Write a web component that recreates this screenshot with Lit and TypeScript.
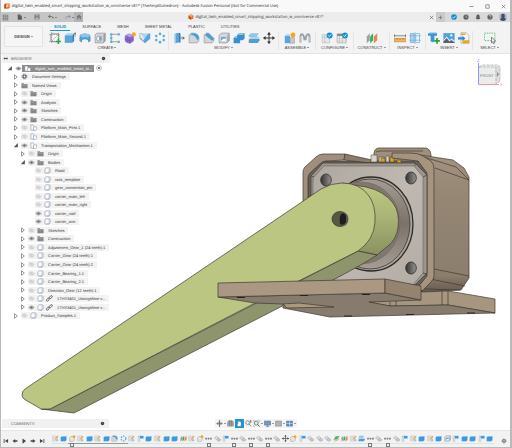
import { LitElement, html, svg, css, nothing } from "lit";
import { customElement, property } from "lit/decorators.js";
import { classMap } from "lit/directives/class-map.js";

/* All glyphs are drawn on a 16 x 16 grid. */
const GLYPHS: Record<string, unknown> = {
  sketch: svg`<path d="M2.500 2.500h10.500v10.500H2.500z" fill="#fafafa" stroke="#777" stroke-width="1"/><path d="M0 3.500h15M0 12.500h11M3.500 0v15M12.500 1v10M4 12l8-8" stroke="#777" stroke-width=".8" stroke-dasharray="2 1"/><path d="M12.500 9v7M9 12.500h7" stroke="#27a844" stroke-width="2"/>`,
  extrude: svg`<path d="M1 4.500l3-3h9l-2 3z" fill="#a9d3ef"/><path d="M1 4.500h10v10H1z" fill="#5aa5dc"/><path d="M11 4.500l2.500-3V12L11 14.500z" fill="#2f7fbd"/><path d="M14.800 1v5M13.500 3l1.300-2 1.200 2" stroke="#444" fill="none" stroke-width=".8"/>`,
  revolve: svg`<path d="M1 4q7-4 14 0v8l-3 2v-3q-4-2.500-8 0v3l-3-2z" fill="#4b9ed6"/><path d="M1 4q7-4 14 0l-3 3.500q-4-2-8 0z" fill="#8cc5ea"/><path d="M1 7q-2 3 1 6M15 7q2 3-1 6" stroke="#888" fill="none" stroke-width=".7"/>`,
  hole: svg`<path d="M1.500 3.500l2.500-2H15V12l-2.500 2.500h-11z" fill="#d3d6d9" stroke="#888" stroke-width=".8"/><path d="M12.500 3.500v11L15 12V1.500z" fill="#989ea4"/><circle cx="7" cy="8.800" r="3.500" fill="#f5f9fc" stroke="#777" stroke-width=".8"/><path d="M7 6v5.600a2.800 2.800 0 000-5.600z" fill="#5a9fcf"/>`,
  points: svg`<path d="M3 3h10M3 13h10M3 3v10" stroke="#777" stroke-width=".9"/><path d="M1.500 1.500h3v3h-3zM11.500 1.500h3v3h-3zM1.500 11.500h3v3h-3zM11.500 11.500h3v3h-3zM1.500 6.500h3v3h-3z" fill="#5fb0e0"/>`,
  form: svg`<path d="M1 6q0-2 2-2.500L7 2l6 2.500v7.500l-5 3.500-5-1.500q-2-1-2-3z" fill="#8c6bd0"/><path d="M2 5l5-3 6 2-5 3z" fill="#b7a0ea"/><path d="M5 5v9M8 7v8M1.500 9.500L8 11.500l5-2.500" stroke="#6845b3" stroke-width=".7" fill="none"/><circle cx="13" cy="3.200" r="2.800" fill="#f7a81b"/>`,
  thicken: svg`<path d="M1 2h3l4 6 4-6h3v7l-7 6-7-6z" fill="#5aa5dc"/><path d="M1 2h3l4 6-2 4-5-5z" fill="#e3e6e8" stroke="#999" stroke-width=".5"/><path d="M4 2h8L8 8z" fill="#a8d2ee"/>`,
  pattern: svg`<g fill="#58aade"><circle cx="8" cy="2.500" r="1.700"/><circle cx="13" cy="5.200" r="1.700"/><circle cx="13" cy="10.800" r="1.700"/><circle cx="8" cy="13.500" r="1.700"/><circle cx="3" cy="10.800" r="1.700"/><circle cx="3" cy="5.200" r="1.700"/></g>`,
  presspull: svg`<path d="M3 2l5-1v13l-5 1z" fill="#5aa5dc"/><path d="M8 1l2 1v12l-2 0z" fill="#2f7fbd"/><path d="M1.500 3v12h2V2.500z" fill="#a9d3ef"/><path d="M10 8h5M13 6l2 2-2 2" stroke="#444" fill="none"/>`,
  fillet: svg`<path d="M1.500 14.500V4l3-2.500h3a7 7 0 017 7V12L12 14.500z" fill="#d3d6d9" stroke="#8d9296" stroke-width=".8"/><path d="M5 1.500h3a7 7 0 017 7l-3 2.500A8 8 0 003 4z" fill="#4b9ed6"/>`,
  chamfer: svg`<path d="M1.500 14.500V4l3-2.500h3l7 7V12L12 14.500z" fill="#d3d6d9" stroke="#8d9296" stroke-width=".8"/><path d="M5 1.500h2.500L15 9l-3 2.500L2.500 4z" fill="#4b9ed6"/>`,
  shell: svg`<path d="M1.500 4.500l3-3H15v10l-3 3H1.500z" fill="#d6d9dc" stroke="#858b90" stroke-width=".9"/><path d="M4 6.500h6.500v5.500H4z" fill="#62ade0"/><path d="M4 12l3-3h3.500v3z" fill="#fff"/><path d="M12 4.500v10l3-3v-10z" fill="#a7adb2"/>`,
  combine: svg`<path d="M5.500 4l2.500-2.500h7.500v7L13 11H9.500v4H.8V8L3 6h2.500z" fill="#3b8fcc"/><path d="M5.500 4L8 1.500h7.500L13 4zM.8 8L3 6h2.500v2z" fill="#8cc5ea"/>`,
  split: svg`<path d="M1 4l3-2.500h11L12.500 4v2.500H1z" fill="#8cc5ea"/><path d="M1 10l3-1h11.500v2L13 14.500H1z" fill="#4b9ed6"/><path d="M0 8.500l4-1.500h12l-3 1.800z" fill="#b9bec2"/>`,
  move: svg`<path d="M8 1v14M1 8h14" stroke="#333" stroke-width="1.300"/><path d="M8 0l2.600 3.500H5.400zM8 16l2.600-3.500H5.400zM0 8l3.500-2.600v5.200zM16 8l-3.500-2.600v5.200z" fill="#333"/>`,
  component: svg`<path d="M1 5h7v10H1z" fill="#5aa5dc"/><path d="M8 7.500h6V15H8z" fill="#c4c8cc" stroke="#888" stroke-width=".6"/><path d="M1 5l2-2h6L8 5z" fill="#a9d3ef"/><circle cx="12" cy="4" r="3.200" fill="#f9a51a"/>`,
  joint: svg`<path d="M2 14V6q0-3 2-3 1.500 0 2.500 3l1 5M14 14V6q0-3-2-3-1.500 0-2.500 3l-1 5" fill="none" stroke="#9ba1a7" stroke-width="2.600"/><path d="M2.500 13V6M13.500 13V6" stroke="#e4e6e8" stroke-width=".9"/>`,
  config: svg`<path d="M1.500 3.500h10v11h-10z" fill="#e6e8ea" stroke="#bbb" stroke-width=".8"/><path d="M1.500 7h10M5 3.500v11" stroke="#b5b9bc" stroke-width=".8"/><circle cx="11.500" cy="4.500" r="4" fill="#1490df"/><path d="M9.500 4.500l1.500 1.600 2.600-3" stroke="#fff" fill="none" stroke-width="1.100"/>`,
  configtable: svg`<path d="M1.500 2.500h12v12h-12z" fill="#f3f4f5" stroke="#999" stroke-width=".8"/><path d="M1.500 5.500h12v-3h-12z" fill="#888"/><path d="M4.500 5.500v9M8.500 5.500v9M1.500 9h12M1.500 12h12" stroke="#aaa" stroke-width=".7"/><circle cx="12" cy="4.500" r="3.800" fill="#1490df"/><path d="M10.200 4.500l1.300 1.500 2.400-2.800" stroke="#fff" fill="none" stroke-width="1.100"/>`,
  planes: svg`<path d="M1 6l4-4.500V11L1 15z" fill="#9aa0a5"/><path d="M5.500 6l4-4.500V11l-4 4z" fill="#3aae5c"/><path d="M10.500 6L15 1.500V11l-4.500 4z" fill="#e8835c"/>`,
  plane: svg`<path d="M1 11L6 3l9-1-5 8z" fill="#54b46c"/><path d="M2 14l9-2 3-4" stroke="#e8835c" fill="none" stroke-width="1.400"/>`,
  measure: svg`<path d="M0 8.500h16v4.500H0z" fill="#f4b65a" stroke="#a97428" stroke-width=".7"/><path d="M0 5h16M.5 3v4M15.500 3v4" stroke="#555" stroke-width=".9"/><path d="M4 8.500v2M8 8.500v2M12 8.500v2" stroke="#7a5115" stroke-width=".8"/>`,
  section: svg`<path d="M2 2h5v12H2z" fill="#a9d3ef" stroke="#5aa5dc" stroke-width=".8"/><path d="M9 2h5v12H9z" fill="#eaf4fa" stroke="#5aa5dc" stroke-width=".8"/><path d="M0 5h16M0 11h16M8 0v16" stroke="#6fa9d0" stroke-width=".8"/>`,
  insert: svg`<path d="M0 2l2-1h9l1 1v3H8.500v7.500l-2.500 1-2.500-1V5H0z" fill="#3b96d6"/><path d="M0 2l2-1h9l1 1z" fill="#8cc5ea"/><path d="M12 8v7.500M8.200 11.800h7.600" stroke="#22a346" stroke-width="2.200"/>`,
  picture: svg`<path d="M.5 1.500h15v13H.5z" fill="#4ea3dd"/><path d="M.5 14.500V11L5 6l4 5 2.500-2.500 4 3.500v2.500z" fill="#e9f3fa"/><path d="M.5 14.500v-2L5 8l3.500 4.500 2.500-2 4.500 3v1z" fill="#55616b"/><circle cx="11" cy="4.500" r="1.500" fill="#fff"/>`,
  importfile: svg`<path d="M4 1h7l3.500 3.500V15H4z" fill="#f5f5f5" stroke="#999" stroke-width=".8"/><path d="M0 7h6V5l4 3.500L6 12v-2H0z" fill="#2c8ed3"/><path d="M6 11h9v4H6z" fill="#eba51e"/><path d="M4 2h6v2H4z" fill="#eba51e"/>`,
  select: svg`<path d="M.5 1.500h14v10H.5z" fill="none" stroke="#41b065" stroke-width="1" stroke-dasharray="2 1.200"/><path d="M10 7l5.500 5-2.500.3 1.200 2.600-1.400.7-1.200-2.600-1.600 1.500z" fill="#fff" stroke="#333" stroke-width=".8"/>`,
  sketchsmall: svg`<path d="M1.500 2.500h10v11h-10z" fill="#eef1f3" stroke="#a9aeb2"/><path d="M1.500 6h10M1.500 10h10M5 2.500v11" stroke="#b8bcc0" stroke-width=".7"/><path d="M6 9l7-7.500 2 2L8.500 10z" fill="#eea23d"/><path d="M9 12h6M12 9v6" stroke="#71b5e0" stroke-width="1.200"/>`,
  boxblue: svg`<path d="M1.500 4.500L4.500 2h10L12 4.500z" fill="#83c2ec"/><path d="M1.500 4.500H12v10H1.500z" fill="#3b9be0"/><path d="M12 4.500L14.500 2v10L12 14.500z" fill="#2277b8"/>`,
  flag: svg`<path d="M2.500 2h4v13h-4z" fill="#dfe2e4" stroke="#a6abb0" stroke-width=".8"/><path d="M6.500 2h8.500v6H6.500z" fill="#3f9bdc"/>`,
  dots: svg`<path d="M.5 6h3.800v4H.5zM6.100 6h3.800v4H6.100zM11.700 6h3.800v4h-3.800z" fill="#77797c"/>`,
  jointsmall: svg`<path d="M2 5l4-2 4 2v3l-4 2-4-2z" fill="#dfe1e3" stroke="#9a9ea2"/><path d="M7 10l4-2.500 4 2v3l-4 2-4-2z" fill="#c9ccce" stroke="#909498"/>`,
  comp: svg`<path d="M1.500 6L4 3.500h8V12l-2.500 2.500h-8z" fill="#e5e7e9" stroke="#8d9195"/><circle cx="11.500" cy="4" r="3.300" fill="#f5aa28"/>`,
  ring: svg`<circle cx="8" cy="8" r="5.500" fill="none" stroke="#4ca5de" stroke-width="2.400" stroke-dasharray="3.600 2"/>`,
  cube: svg`<path d="M2 5q0-1 1-1.500L5 2h7q2 0 2 2v7l-2.500 3H4q-2 0-2-2z" fill="#fafbfc" stroke="#6a7a90" stroke-width="1.100"/><path d="M5 13.500h5q1.500 0 1.500-1.500V4" stroke="#8794a6" fill="none"/>`,
  part: svg`<path d="M2 14V2h5l2 2.500V14z" fill="#fafbfc" stroke="#6a7a90"/><path d="M8 8l2-1.500h5V13l-1.500 1.500H8z" fill="#fff" stroke="#6a7a90"/>`,
  folder: svg`<path d="M1 3h5l1.500 1.500H15V14H1z" fill="#858585"/><path d="M1 6.500h14" stroke="#d5d5d5" stroke-width=".9"/><path d="M4 6.500V14M8 6.500V14" stroke="#9a9a9a" stroke-width=".7"/>`,
  gear: svg`<circle cx="8" cy="8" r="3.600" fill="none" stroke="#5a5a5a" stroke-width="2.400"/><circle cx="8" cy="8" r="5.600" fill="none" stroke="#5a5a5a" stroke-width="2" stroke-dasharray="2.200 2.200"/>`,
  link: svg`<g fill="none" stroke="#4a4a4a" stroke-width="1.800"><rect x="-.5" y="8.500" width="8" height="4.200" rx="2.100" transform="rotate(-45 4 10)"/><rect x="7" y="2.800" width="8" height="4.200" rx="2.100" transform="rotate(-45 11 5)"/></g>`,
  eye: svg`<path d="M1.500 8q6.500-7 13 0-6.500 7-13 0z" fill="#c4c4c4" stroke="#8a8a8a" stroke-width="1.300"/><circle cx="8" cy="8" r="2.500" fill="#666"/>`,
  eyeoff: svg`<path d="M1.500 8q6.500-7 13 0-6.500 7-13 0z" fill="none" stroke="#b5b5b5" stroke-width="1.200"/><circle cx="8" cy="8" r="2" fill="none" stroke="#b5b5b5"/><path d="M4 3.500l8 9" stroke="#b5b5b5"/>`,
  closed: svg`<path d="M4 2l7.500 6L4 14z" fill="#fff" stroke="#555" stroke-width="1.600"/>`,
  open: svg`<path d="M13 2.500v11.500H2z" fill="#555"/>`,
  target: svg`<circle cx="8" cy="8" r="6.500" fill="#fff" stroke="#777" stroke-width="1.300"/><circle cx="8" cy="8" r="2.800" fill="#555"/>`,
  grid: svg`<path d="M1 2.500h14M1 6.200h14M1 9.900h14M1 13.500h14M3.500 2v12M8 2v12M12.500 2v12" stroke="#777" stroke-width="1.400"/>`,
  file: svg`<path d="M2 1h7l4 4v10H2z" fill="#5b5b5b"/><path d="M9 1v4h4" stroke="#ccc" fill="none"/>`,
  save: svg`<path d="M1.500 1.500h13v13h-13z" fill="#6c6c6c"/><path d="M4.500 2h7v4.500h-7zM4 9.500h8V14H4z" fill="#c4c4c4"/><path d="M8 3v3" stroke="#555" stroke-width="1.500"/>`,
  undo: svg`<path d="M6 2L1.500 6.500 6 11M2 6.500h7q5 0 5 6" fill="none" stroke="#555" stroke-width="2"/>`,
  redo: svg`<path d="M10 2l4.500 4.500L10 11M14 6.500H7q-5 0-5 6" fill="none" stroke="#888" stroke-width="2"/>`,
  home: svg`<path d="M8 1l7.500 7H13v6.500H9.800V10H6.200v4.500H3V8H.5z" fill="#777"/>`,
  fusion: svg`<path d="M1 4l4-3h10v11l-3 3H1z" fill="#ee6b1d"/><path d="M1 4l4-3v10l-4 4z" fill="#b9420c"/><path d="M6.500 12V4h6v1.800H8.600v1.500h3.300V9H8.600v3z" fill="#fff"/>`,
  doc: svg`<path d="M8 .8l6.500 3.500v7.400L8 15.200l-6.500-3.500V4.300z" fill="#ee7433"/><path d="M8 8v7.200l-6.500-3.500V4.300z" fill="#c94e16"/><path d="M8 8L1.500 4.300 8 .8l6.500 3.500z" fill="#f9a56f"/>`,
  close: svg`<path d="M2.500 2.500l11 11M13.500 2.500l-11 11" stroke="#444" stroke-width="1.700"/>`,
  minimize: svg`<path d="M1.500 8h13" stroke="#444" stroke-width="1.700"/>`,
  maximize: svg`<path d="M2.500 2.500h11v11h-11z" fill="none" stroke="#444" stroke-width="1.700"/>`,
  plus: svg`<path d="M8 2v12M2 8h12" stroke="#777" stroke-width="2.500"/>`,
  check: svg`<circle cx="8" cy="8" r="7.500" fill="#1489d2"/><path d="M4 8.500l2.800 3L12 5" stroke="#fff" fill="none" stroke-width="2"/>`,
  clock: svg`<circle cx="8" cy="8" r="7" fill="#606060"/><path d="M8 3.500V8l3.500 2" stroke="#d8d8d8" fill="none" stroke-width="1.600"/>`,
  bell: svg`<path d="M8 .8q1.300 0 1.500 1.400Q12.500 3 12.500 7v3.500l2 2.500h-13l2-2.500V7q0-4 3-4.800Q6.700.8 8 .8zM6 14h4q-2 3-4 0z" fill="#5a5a5a"/>`,
  help: svg`<circle cx="8" cy="8" r="7" fill="#606060"/><path d="M5.500 6q0-2.500 2.500-2.500t2.500 2.300Q10.500 7.500 8 8.800M8 10.800v2" stroke="#e0e0e0" fill="none" stroke-width="1.700"/>`,
  user: svg`<circle cx="8" cy="8" r="8" fill="#b5bcc8"/><ellipse cx="8" cy="6" rx="3.800" ry="4.500" fill="#3f4f6d"/><path d="M2 13q1-4 6-4t6 4q-6 6-12 0z" fill="#3f4f6d"/>`,
  collapse: svg`<path d="M7 4v8L1.500 8zM14 4v8L8.500 8zM6 6.800h9v2.400H6z" fill="#444"/>`,
  dot: svg`<circle cx="8" cy="8" r="5.500" fill="#444"/><circle cx="8" cy="8" r="1.200" fill="#999"/>`,
  orbit: svg`<path d="M8 2v12M2 8h12" stroke="#666" stroke-width="1.800"/><ellipse cx="8" cy="8" rx="6.500" ry="2.800" fill="none" stroke="#777" stroke-width="1.200"/><path d="M8 0l2 3H6zM8 16l2-3H6z" fill="#555"/>`,
  look: svg`<path d="M1.500 4h13v10h-13z" fill="#b5b5b5" stroke="#666"/><path d="M4 1.500h8V4H4zM1.500 9h13M6 4v10M10 4v10" fill="#999" stroke="#666"/>`,
  hand: svg`<path d="M4 15L1.500 9.500q1-1.500 2.500.5V3.500q1-1.500 2 0V2q1-1.500 2 0v1q1-1.500 2 0v1.500q1.200-1.200 2 0V11l-1.500 4z" fill="#fff" stroke="#22455c" stroke-width=".8"/>`,
  zoom: svg`<circle cx="6" cy="6" r="4.300" fill="none" stroke="#666" stroke-width="1.500"/><path d="M9 9l5 5.500M13 1v6M11 3l2-2 2 2" stroke="#555" stroke-width="1.600" fill="none"/>`,
  fit: svg`<path d="M1 1h4M1 1v4M15 1h-4M15 1v4M1 15v-4M1 15h4" stroke="#999" fill="none"/><circle cx="7.500" cy="7" r="4.600" fill="#d9ece0" stroke="#4c6b58" stroke-width="1.600"/><path d="M11 10.500l4 4.500" stroke="#444" stroke-width="2"/>`,
  display: svg`<path d="M1 2.500h14v9H1z" fill="#6c9dce" stroke="#606b78" stroke-width="1.300"/><path d="M8 11v3M4 14.500h8" stroke="#606b78" stroke-width="1.500"/>`,
  gridview: svg`<path d="M1 2.500h14v11.500H1z" fill="#a5a9ad" stroke="#777"/><path d="M1 6.500h14M1 10h14M5.500 2.500V14M10.500 2.500V14" stroke="#c8cbce" stroke-width=".8"/>`,
  views: svg`<path d="M1 2.500h14v11.500H1z" fill="#5c8fc7" stroke="#4e6683"/><path d="M8 2.500V14M1 8h14" stroke="#e3edf6" stroke-width="1.300"/>`,
  first: svg`<path d="M3 2.500v11" stroke="#444" stroke-width="2.200"/><path d="M13.500 2.500v11L5 8z" fill="#444"/>`,
  prev: svg`<path d="M8.500 2.500v11L1.500 8zM8 6.300h6.500v3.400H8z" fill="#444"/>`,
  play: svg`<path d="M4 1l9.500 7L4 15z" fill="#444"/>`,
  next: svg`<path d="M7.500 2.500v11l7-5.500zM8 6.300H1.500v3.400H8z" fill="#444"/>`,
  last: svg`<path d="M13 2.500v11" stroke="#444" stroke-width="2.200"/><path d="M2.500 2.500v11L11 8z" fill="#444"/>`,
};

const icon = (name: string, size = "m") =>
  html`<svg class="icon ${size}" viewBox="0 0 16 16" aria-hidden="true">${GLYPHS[name]}</svg>`;

const shared = css`
  *, *::after { box-sizing: border-box; }
  button {
    font: inherit; color: inherit; background: none; border: 0; padding: 0; margin: 0;
    display: flex; align-items: center; justify-content: center; white-space: nowrap;
  }
  ul { list-style: none; margin: 0; padding: 0; }
  .icon { display: block; flex: none; }
  .xs { width: 5px; height: 5px; }
  .s { width: 6px; height: 6px; }
  .m { width: 7px; height: 7px; }
  .l { width: 8px; height: 8px; }
  .xl { width: 12px; height: 12px; }
  .caret::after {
    content: ""; margin-left: 1px; border: 1px solid transparent;
    border-top-color: #444; border-bottom: 0;
  }
`;

@customElement("title-bar")
export class TitleBar extends LitElement {
  static styles = [shared, css`
    :host { display: block; font-family: "Open Sans", "Liberation Sans", sans-serif; }
    .title { display: flex; align-items: center; height: 12px; padding: 0 4px 0 3px; background: #f9f9f9; color: #222; }
    .title h1 { margin: 0 auto 0 2px; font-size: 4px; font-weight: 400; white-space: nowrap; }
    .window { display: flex; gap: 11px; }
    .tabs { display: flex; height: 10px; background: #d9d9d9; }
    .quick { display: flex; align-items: center; width: 73px; padding-left: 1px; gap: 8px; background: #c5c5c5; }
    .home { width: 9px; background: #b3b3b3; }
    .document { flex: 1; display: flex; align-items: center; background: #ececec; padding-right: 2px; color: #333; }
    .name { flex: 1; display: flex; align-items: center; justify-content: center; gap: 1px; font-size: 4px; white-space: nowrap; }
    .add { width: 9px; background: #cacaca; }
    .account { display: flex; align-items: center; gap: 6px; padding: 0 3px 0 6px; }
  `];
  render() {
    return html`
      <header class="title">
        ${icon("fusion", "s")}
        <h1>digital_twin_enabled_smart_shipping_workstation_w_omniverse v81* (TheAmplituhedron) - Autodesk Fusion Personal (Not for Commercial Use)</h1>
        <div class="window">
          ${["minimize", "maximize", "close"].map((n) => html`<button aria-label=${n}>${icon(n, "xs")}</button>`)}
        </div>
      </header>
      <div class="tabs">
        <div class="quick">
          <button aria-label="Data panel">${icon("grid", "m")}</button>
          <button class="caret" aria-label="File">${icon("file", "s")}</button>
          <button aria-label="Save">${icon("save", "s")}</button>
          <button class="caret" aria-label="Undo">${icon("undo", "s")}</button>
          <button class="caret" aria-label="Redo">${icon("redo", "s")}</button>
        </div>
        <button class="home" aria-label="Home">${icon("home", "s")}</button>
        <div class="document">
          <span class="name">${icon("doc", "s")}digital_twin_enabled_smart_shipping_workstation_w_omniverse v81*</span>
          <button aria-label="Close document">${icon("close", "xs")}</button>
        </div>
        <button class="add" aria-label="New design">${icon("plus", "xs")}</button>
        <div class="account">
          ${["check", "clock", "bell", "help"].map((n) => html`<button aria-label=${n}>${icon(n, "s")}</button>`)}
          <button aria-label="Profile">${icon("user", "l")}</button>
        </div>
      </div>`;
  }
}

const GROUPS: [string, string[]][] = [
  ["CREATE", ["sketch", "extrude", "revolve", "hole", "points", "form", "thicken", "pattern"]],
  ["MODIFY", ["presspull", "fillet", "chamfer", "shell", "combine", "split", "move"]],
  ["ASSEMBLE", ["component", "joint"]],
  ["CONFIGURE", ["config", "configtable"]],
  ["CONSTRUCT", ["planes"]],
  ["INSPECT", ["measure", "section"]],
  ["INSERT", ["insert", "picture", "importfile"]],
  ["SELECT", ["select"]],
];

@customElement("tool-ribbon")
export class ToolRibbon extends LitElement {
  static styles = [shared, css`
    :host { display: block; }
    .ribbon {
      display: grid; grid-template-columns: 45fr 123fr 110fr 37fr 38fr 36fr 36fr 47fr 33fr; padding-right: 4px;
      grid-template-rows: 9px 22px; background: #f3f3f3; font-size: 4px; color: #444;
      border-bottom: 1px solid #e4e4e4;
    }
    .design { grid-row: 1 / 3; margin: 4px 3px 6px; border: 1px solid #e3e3e3; border-radius: 1px; background: #f6f6f6; font-weight: 700; }
    .modes { grid-column: 2 / -1; display: flex; padding-left: 4px; gap: 8px; }
    .mode { padding: 0 4px; border-bottom: 1px solid transparent; }
    .mode.active { color: #0a8bcb; font-weight: 700; border-color: #1499d8; }
    .group { display: flex; flex-direction: column; align-items: center; border-right: 1px solid #e5e5e5; margin-bottom: 3px; }
    .group:last-child { border: 0; }
    .tools { display: flex; gap: 3px; height: 14px; align-items: center; }
    .label { line-height: 5px; }
  `];
  render() {
    return html`<div class="ribbon">
      <button class="design caret">DESIGN</button>
      <nav class="modes">
        ${["SOLID", "SURFACE", "MESH", "SHEET METAL", "PLASTIC", "UTILITIES"].map((m, i) =>
          html`<button class=${classMap({ mode: true, active: i === 0 })}>${m}</button>`)}
      </nav>
      ${GROUPS.map(([label, tools]) => html`<div class="group">
        <div class="tools">${tools.map((t) => html`<button aria-label=${t}>${icon(t, "xl")}</button>`)}</div>
        <button class="label caret">${label}</button>
      </div>`)}
    </div>`;
  }
}

interface Node { depth: number; text: string; arrow?: "open" | "closed"; eye?: "eye" | "eyeoff"; icon: string; linked?: boolean; root?: boolean }
const n = (depth: number, text: string, arrow: Node["arrow"], eye: Node["eye"], ic: string, linked = false): Node =>
  ({ depth, text, arrow, eye, icon: ic, linked, root: depth === 0 });

const TREE: Node[] = [
  n(0, "digital_twin_enabled_smart_st...", "open", "eye", "part"),
  n(1, "Document Settings", "closed", undefined, "gear"),
  n(1, "Named Views", "closed", undefined, "folder"),
  n(1, "Origin", "closed", "eyeoff", "folder"),
  n(1, "Analysis", "closed", "eye", "folder"),
  n(1, "Sketches", "closed", "eye", "folder"),
  n(1, "Construction", "closed", "eye", "folder"),
  n(1, "Platform_Main_First:1", "closed", "eyeoff", "part"),
  n(1, "Platform_Main_Second:1", "closed", "eyeoff", "part"),
  n(1, "Transportation_Mechanism:1", "open", "eye", "part"),
  n(2, "Origin", "closed", "eyeoff", "folder"),
  n(2, "Bodies", "open", "eye", "folder"),
  n(3, "Road", undefined, "eyeoff", "cube"),
  n(3, "rack_template", undefined, "eyeoff", "cube"),
  n(3, "gear_connection_pin", undefined, "eyeoff", "cube"),
  n(3, "carrier_main_left", undefined, "eyeoff", "cube"),
  n(3, "carrier_main_right", undefined, "eyeoff", "cube"),
  n(3, "carrier_roof", undefined, "eye", "cube"),
  n(3, "carrier_arm", undefined, "eye", "cube"),
  n(2, "Sketches", "closed", "eyeoff", "folder"),
  n(2, "Construction", "closed", "eye", "folder"),
  n(2, "Adjustment_Gear_1 (24 teeth):1", "closed", "eyeoff", "cube"),
  n(2, "Carrier_Gear (24 teeth):1", "closed", "eyeoff", "cube"),
  n(2, "Carrier_Gear (24 teeth):2", "closed", "eyeoff", "cube"),
  n(2, "Carrier_Bearing_1:1", "closed", "eyeoff", "cube"),
  n(2, "Carrier_Bearing_2:1", "closed", "eyeoff", "cube"),
  n(2, "Direction_Gear (12 teeth):1", "closed", "eyeoff", "cube"),
  n(2, "17HS3401_Usongshine v...", "closed", "eyeoff", "cube", true),
  n(2, "17HS3401_Usongshine v...", "closed", "eye", "cube", true),
  n(1, "Product_Samples:1", "closed", "eyeoff", "cube"),
];

@customElement("browser-panel")
export class BrowserPanel extends LitElement {
  @property({ type: Array }) nodes: Node[] = TREE;
  static styles = [shared, css`
    :host { display: block; font-size: 4px; color: #333; }
    .head { display: flex; align-items: center; height: 9px; background: #f1f1f1; padding: 0 4px 0 1px; color: #666; }
    .head h2 { font-size: 4px; font-weight: 400; margin: 0 auto 0 3px; }
    /* Thirty equal rows share the height of the list. */
    .tree { display: grid; grid-auto-rows: 1fr; height: 256px; margin-top: 1px; }
    .row { display: flex; align-items: center; gap: 2px; }
    .d0 { padding-left: 5px; }
    .d1 { padding-left: 11px; }
    .d2 { padding-left: 18px; }
    .d3 { padding-left: 25px; }
    .arrow { width: 6px; }
    .chip { display: flex; align-items: center; gap: 2px; height: 7px; background: #f3f3f3; padding-right: 4px; white-space: nowrap; }
    .text { margin-left: 2px; }
    .root .chip { background: #8d8d8d; color: #fff; padding-right: 2px; }
    .root .visible { background: #fff; height: 7px; }
  `];
  render() {
    return html`
      <div class="head">${icon("collapse", "xs")}<h2>BROWSER</h2><button aria-label="Panel options">${icon("dot", "xs")}</button></div>
      <ul class="tree">
        ${this.nodes.map((d) => html`<li class=${classMap({ row: true, ["d" + d.depth]: true, root: !!d.root })}>
          <span class="arrow">${d.arrow ? html`<button aria-label="Toggle">${icon(d.arrow, "s")}</button>` : nothing}</span>
          <span class="chip">
            ${d.eye ? html`<button class="visible" aria-label="Visibility">${icon(d.eye)}</button>` : nothing}
            ${icon(d.icon)}
            ${d.linked ? icon("link") : nothing}
            <span class="text">${d.text}</span>
          </span>
          ${d.root ? icon("target", "s") : nothing}
        </li>`)}
      </ul>`;
  }
}

@customElement("model-view")
export class ModelView extends LitElement {
  static styles = css`
    :host { display: block; }
    svg { display: block; width: 100%; height: 100%; }
    .edge { stroke: #3f3a34; stroke-width: .7; stroke-linejoin: round; }
    .line { stroke: #3f3a34; stroke-width: .7; fill: none; }
  `;
  render() {
    return html`<svg viewBox="1 54 509 376" role="img" aria-label="Stepper motor with carrier arm">
      <defs>
        <linearGradient id="face" x1="0" y1="0" x2="1" y2="1"><stop offset="0" stop-color="#aea79f"/><stop offset=".5" stop-color="#bfb9b2"/><stop offset="1" stop-color="#b3aca5"/></linearGradient>
        <linearGradient id="side" x1="0" y1="0" x2="0" y2="1"><stop offset="0" stop-color="#a3927f"/><stop offset=".3" stop-color="#958774"/><stop offset=".88" stop-color="#8c7e6d"/><stop offset="1" stop-color="#675b4e"/></linearGradient>
        <linearGradient id="round" x1="0" y1="0" x2="0" y2="1"><stop offset="0" stop-color="#bfca84"/><stop offset=".45" stop-color="#abb576"/><stop offset="1" stop-color="#8a9160"/></linearGradient>
        <linearGradient id="boss" x1="0" y1="0" x2="0" y2="1"><stop offset="0" stop-color="#a49b93"/><stop offset=".5" stop-color="#7b726a"/><stop offset="1" stop-color="#a69d94"/></linearGradient>
        <linearGradient id="bore" x1="0" y1="0" x2="1" y2="0"><stop offset="0" stop-color="#333"/><stop offset="1" stop-color="#999690"/></linearGradient>
      </defs>
      <path class="edge" fill="#a08f7c" d="M374 162V153q1-5 5-5h46q5 0 6 7v8z"/>
      <path class="line" d="M376 152q2-1 5-1h42"/>
      <path class="edge" fill="url(#side)" d="M414 154l39 6 11 8 5 9v101l-8 12-40 2-8-130z"/>
      <path class="line" d="M424 157l32 10 13 13M435 168l34 12M434 269l35 7M430 279l35 7M424 289l36 1"/>
      <path class="edge" fill="#6a6259" d="M308 200v-27l13-12h97l12 11v102l-11 11h-5z"/>
      <path class="edge" fill="#a08f7c" d="M303 203v-31q0-3 2-5l11-10q3-3 7-3h22l-1 6-18 1q-3 0-5 2l-11 10q-2 2-2 5v22z"/>
      <path class="edge" fill="#8a7b6a" d="M345 154l27 6-2 3-26-3z"/>
      <g fill="#d9d2bf" stroke="#3f3a34" stroke-width=".5"><path d="M371 155h6v7h-6zM379 157h5v5h-5zM386 156h3v6h-3z"/><path d="M381 158h4v4h-4zM390 157h4v5h-4zM397 160h4v3h-4z" fill="#dba419"/></g>
      <path class="edge" fill="#a6947f" d="M392 153h19q7 0 12 3l8 5q3 3 3 8v107q0 3-3 6l-9 9-4-4 9-11V173l-9-12-26-3z"/>
      <path class="edge" fill="#9c958d" d="M311 197v-21l12-13h92l12 12v98l-12 12h-80z"/>
      <path fill="url(#face)" stroke="#6a645d" stroke-width=".6" d="M313 197v-19l11-12h90l9 11v96l-10 12h-78z"/>
      <path class="line" d="M311 176l3 1M427 175l-4 2M427 274l-4-1M415 163v3"/>
      <ellipse cx="371" cy="224" rx="42" ry="47" fill="#aaa39c" stroke="#2e2b28" stroke-width="1.300"/>
      <ellipse cx="370" cy="224" rx="40" ry="45" fill="url(#boss)" stroke="#3b3733" stroke-width=".8"/>
      <ellipse cx="361" cy="223" rx="39" ry="41" fill="#80776f" stroke="#6c645c" stroke-width=".5"/>
      ${[[326, 180], [411, 178], [411, 268]].map(([x, y]) => svg`<ellipse cx=${x} cy=${y} rx="5.300" ry="6" fill="url(#bore)" stroke="#2f2c29" stroke-width=".8"/>`)}
      <path class="edge" fill="url(#round)" d="M342 183l24 4q18 4 27 16 7 9 5 25-2 12-10 18l-11 9-19-4z"/>
      <path class="edge" fill="#8e946c" d="M41 409l9 0L358 251l19 4q-10 7-44 25L74 413z"/>
      <path class="edge" fill="#bcc683" d="M22 395q0-4 3-6L290 210l31-21q10-6 21-6 18 0 27 13 7 10 6 26-1 18-17 29L255 303 50 409h-9l-17-10q-2-2-2-4z"/>
      <ellipse cx="340" cy="219" rx="8" ry="7.500" fill="#575a42" stroke="#34342a" stroke-width=".7"/>
      <path fill="#5d5751" d="M341 212q7 0 7 7t-5 7q-4-5-2-14z"/><path fill="#1f1e1c" d="M341 214q4-2 5 2v6q-2 4-6 2-1-6 1-10z"/>
      <path class="edge" fill="#a7967f" d="M421 292l27-1 47 8v14l-47-8-58 1-22-4z"/>
      <path class="line" d="M442 291v14M448 291v14"/>
      <path class="edge" fill="#867b6d" d="M218 297l167-4 36 7-52 2 21 4 58-1 47 8-165 4-47-9v-4l-28-1z"/>
      <path class="edge" fill="#ab9881" d="M283 304l16-1 35 4-47 1z"/>
      <path class="line" d="M390 306v-4M396 306v-5"/>
      <path class="edge" fill="#aa9882" d="M218 283l167-4v14l-167 4z"/>
      <path class="edge" fill="#94836f" d="M385 279l36 7v14l-36-7z"/>
      <path d="M237 297.500h8M300 295.500h8M362 294.500h8M344 316h8M406 314.500h8M467 313h8" stroke="#26231f" stroke-width="1"/>
    </svg>`;
  }
}

@customElement("view-cube")
export class ViewCube extends LitElement {
  static styles = css`
    :host { display: block; }
    svg { display: block; width: 100%; }
    .name { font-size: 4px; fill: #81858b; }
    .axis { font-size: 4px; }
  `;
  render() {
    return html`<svg viewBox="0 0 28 32" role="img" aria-label="View cube, front">
      <path d="M3 10l3-2h14v19H3z" fill="#ebecec"/>
      <path d="M19 10l3-2 2 2v14l-4 3z" fill="#dcdee0"/>
      <path d="M3 10l3-2h16l2 2v14l-4 3M3 10h17v17" fill="none" stroke="#b0b3b6" stroke-width=".8" stroke-dasharray="3 1"/>
      <path d="M2.500 6v22" stroke="#9292ff"/><path d="M2 27.500h21" stroke="#f49a9a"/>
      <text class="axis" x="1" y="5" fill="#8585f5">Z</text><text class="axis" x="24" y="29" fill="#f28a8a">X</text>
      <text class="name" x="4" y="20">FRONT</text>
      <path d="M21 15v5l2-3z" fill="#888"/>
    </svg>`;
  }
}

const STEPS = (
  "sketchsmall boxblue comp sketchsmall boxblue sketchsmall boxblue fillet ring sketchsmall flag boxblue sketchsmall " +
  "boxblue boxblue planes sketchsmall comp dots jointsmall flag dots jointsmall dots jointsmall dots jointsmall move " +
  "comp flag jointsmall jointsmall jointsmall plane planes sketchsmall split dots jointsmall dots jointsmall flag " +
  "sketchsmall boxblue sketchsmall boxblue shell flag boxblue boxblue flag boxblue"
).split(" ");
const GROUP_MARKS = new Set([2, 18, 21, 23, 25, 37, 39]);

@customElement("time-line")
export class TimeLine extends LitElement {
  static styles = [shared, css`
    :host { display: block; }
    .bar { display: flex; height: 17px; background: #f2f2f2; border-top: 1px solid #e6e6e6; padding: 3px 3px 0 2px; align-items: center; }
    .play { display: flex; gap: 3px; width: 48px; }
    .steps { flex: 1; display: grid; grid-auto-flow: column; grid-auto-columns: 1fr; }
    .step { display: flex; flex-direction: column; align-items: center; }
    .mark { height: 4px; width: 100%; margin-top: 1px; display: flex; justify-content: center; border-top: 1px solid #e2e2e2; }
    .span { border-top-color: #999; }
    .box::after { content: ""; width: 4px; height: 4px; margin-top: -1px; border: 1px solid #777; background: #f2f2f2; }
    .settings { width: 13px; padding-left: 7px; }
  `];
  render() {
    return html`<footer class="bar">
      <div class="play">${["first", "prev", "play", "next", "last"].map((p) => html`<button aria-label=${p}>${icon(p, "s")}</button>`)}</div>
      <div class="steps">${STEPS.map((s, i) => html`<div class="step">
        <button aria-label=${s}>${icon(s, "m")}</button>
        <span class=${classMap({ mark: true, span: i > 1 && i < 9, box: GROUP_MARKS.has(i) })}></span>
      </div>`)}</div>
      <button class="settings" aria-label="Settings">${icon("gear", "s")}</button>
    </footer>`;
  }
}

@customElement("app-root")
export class AppRoot extends LitElement {
  static styles = [shared, css`
    :host {
      display: flex; flex-direction: column; min-height: 100vh; background: #fff;
      border: 1px solid #b9b9b9; border-width: 0 2px 1px 1px; box-sizing: border-box;
      font-family: "Liberation Sans", Arial, sans-serif; font-size: 4px; line-height: 5px;
      text-rendering: geometricPrecision;
    }
    .canvas { flex: 1; position: relative; display: flex; flex-direction: column; justify-content: space-between; }
    .model { position: absolute; inset: 0; }
    .cube { position: absolute; top: 3px; right: 6px; width: 28px; }
    .browser { position: relative; width: 108px; margin-left: 1px; }
    .bottom { position: relative; display: grid; grid-template-columns: 1fr auto 1fr; align-items: center; margin: 0 1px 2px; }
    .comments { display: flex; align-items: center; justify-content: space-between; width: 107px; height: 9px; padding: 0 4px 0 9px; background: #f1f1f1; color: #666; }
    .nav { display: flex; align-items: center; gap: 1px; height: 9px; padding: 0 1px; background: #f4f4f4; }
    .nav button { height: 9px; }
    .nav .active { background: #1b98dc; padding: 0 1px; }
  `];
  render() {
    const nav = ["orbit", "look", "hand", "zoom", "fit", "display", "gridview", "views"];
    const menus = new Set(["orbit", "fit", "display", "gridview", "views"]);
    return html`
      <title-bar></title-bar>
      <tool-ribbon></tool-ribbon>
      <main class="canvas">
        <model-view class="model"></model-view>
        <view-cube class="cube"></view-cube>
        <browser-panel class="browser"></browser-panel>
        <div class="bottom">
          <div class="comments"><span>COMMENTS</span><button aria-label="Comment options">${icon("dot", "xs")}</button></div>
          <div class="nav">${nav.map((k) => html`<button aria-label=${k} class=${classMap({ caret: menus.has(k), active: k === "hand" })}>${icon(k, "m")}</button>`)}</div>
        </div>
      </main>
      <time-line></time-line>`;
  }
}
